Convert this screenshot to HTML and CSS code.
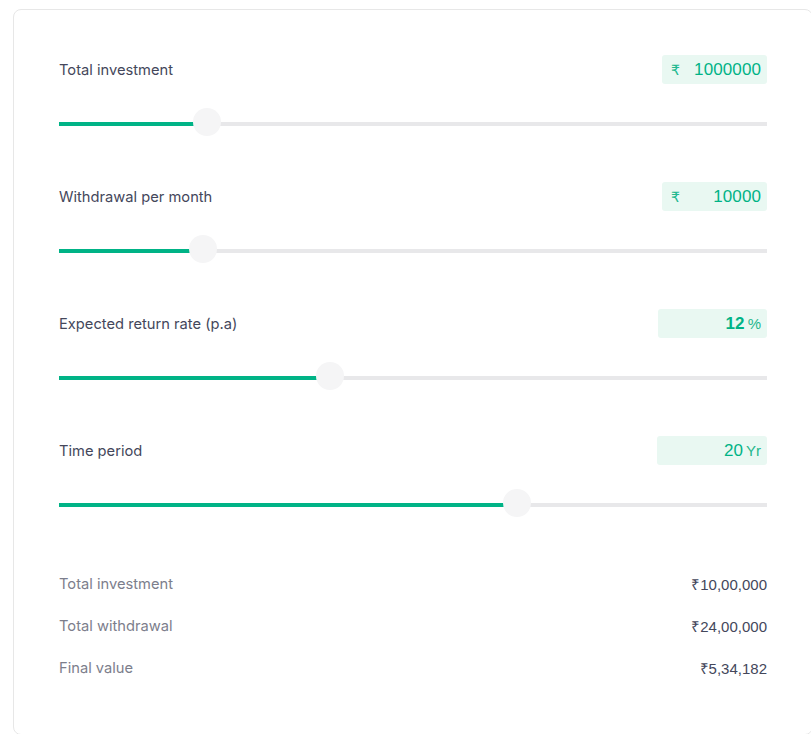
FILE: index.html
```html
<!DOCTYPE html>
<html>
<head>
<meta charset="utf-8">
<link rel="stylesheet" href="styles.css">
</head>
<body>
<div class="card">
  <div class="field">
    <div class="field-head">
      <span class="label">Total investment</span>
      <div class="value-box w105"><span class="unit-pre">₹</span><span class="num">1000000</span></div>
    </div>
    <div class="slider"><div class="track"><div class="fill" style="width:20.9%"></div></div><div class="thumb" style="left:20.9%"></div></div>
  </div>
  <div class="field">
    <div class="field-head">
      <span class="label">Withdrawal per month</span>
      <div class="value-box w105"><span class="unit-pre">₹</span><span class="num">10000</span></div>
    </div>
    <div class="slider"><div class="track"><div class="fill" style="width:20.3%"></div></div><div class="thumb" style="left:20.3%"></div></div>
  </div>
  <div class="field">
    <div class="field-head">
      <span class="label">Expected return rate (p.a)</span>
      <div class="value-box w109 end"><span class="num bold">12</span><span class="unit-post">%</span></div>
    </div>
    <div class="slider"><div class="track"><div class="fill" style="width:38.3%"></div></div><div class="thumb" style="left:38.3%"></div></div>
  </div>
  <div class="field">
    <div class="field-head">
      <span class="label">Time period</span>
      <div class="value-box w110 end"><span class="num">20</span><span class="unit-post">Yr</span></div>
    </div>
    <div class="slider"><div class="track"><div class="fill" style="width:64.7%"></div></div><div class="thumb" style="left:64.7%"></div></div>
  </div>
  <div class="summary">
    <div class="sum-row"><span class="sum-label">Total investment</span><span class="sum-value">₹10,00,000</span></div>
    <div class="sum-row"><span class="sum-label">Total withdrawal</span><span class="sum-value">₹24,00,000</span></div>
    <div class="sum-row"><span class="sum-label">Final value</span><span class="sum-value">₹5,34,182</span></div>
  </div>
</div>
</body>
</html>
```

FILE: styles.css
```css
html, body {
  margin: 0;
  padding: 0;
  background: #ffffff;
  overflow: hidden;
}
body {
  width: 811px;
  height: 734px;
  font-family: "Inter", "Noto Sans", sans-serif;
}
.card {
  box-sizing: border-box;
  margin: 9px 0 0 13px;
  width: 800px;
  height: 726px;
  border: 1px solid #e7e7e7;
  border-radius: 8px;
  padding: 45px 45px 0 45px;
}
.field {
  margin-bottom: 46px;
}
.field:last-of-type {
  margin-bottom: 0;
}
.field-head {
  display: flex;
  justify-content: space-between;
  align-items: center;
  height: 29px;
}
.label {
  font-size: 14.7px;
  color: #44475b;
}
.value-box {
  box-sizing: border-box;
  height: 29px;
  background: #e9f8f2;
  border-radius: 3px;
  display: flex;
  align-items: center;
  justify-content: space-between;
  padding: 0 6px 0 9px;
  color: #00b386;
  font-family: "Liberation Sans", Arial, sans-serif;
}
.value-box.end {
  justify-content: flex-end;
}
.w105 { width: 105px; }
.w109 { width: 109px; }
.w110 { width: 110px; }
.unit-pre {
  font-size: 14px;
  font-family: "DejaVu Sans", sans-serif;
  color: #22b98f;
}
.num {
  font-size: 17px;
  font-weight: 500;
  letter-spacing: 0.1px;
}
.num.bold {
  font-weight: 700;
}
.unit-post {
  font-size: 15px;
  margin-left: 3px;
  color: #1fb78c;
}
.slider {
  position: relative;
  height: 28px;
  margin-top: 24px;
}
.track {
  position: absolute;
  left: 0;
  right: 0;
  top: 14px;
  height: 4px;
  background: #e8e8ea;
}
.fill {
  height: 100%;
  background: #00b386;
}
.thumb {
  position: absolute;
  top: 0;
  width: 28px;
  height: 28px;
  margin-left: -14px;
  border-radius: 50%;
  background: #f5f5f6;
}
.summary {
  margin-top: 57px;
  display: flex;
  flex-direction: column;
  gap: 22px;
}
.sum-row {
  display: flex;
  justify-content: space-between;
  align-items: center;
  height: 20px;
}
.sum-label {
  font-size: 14.7px;
  color: #7c7e8c;
}
.sum-value {
  font-size: 15px;
  font-family: "Liberation Sans", Arial, sans-serif;
  color: #44475b;
}
```
